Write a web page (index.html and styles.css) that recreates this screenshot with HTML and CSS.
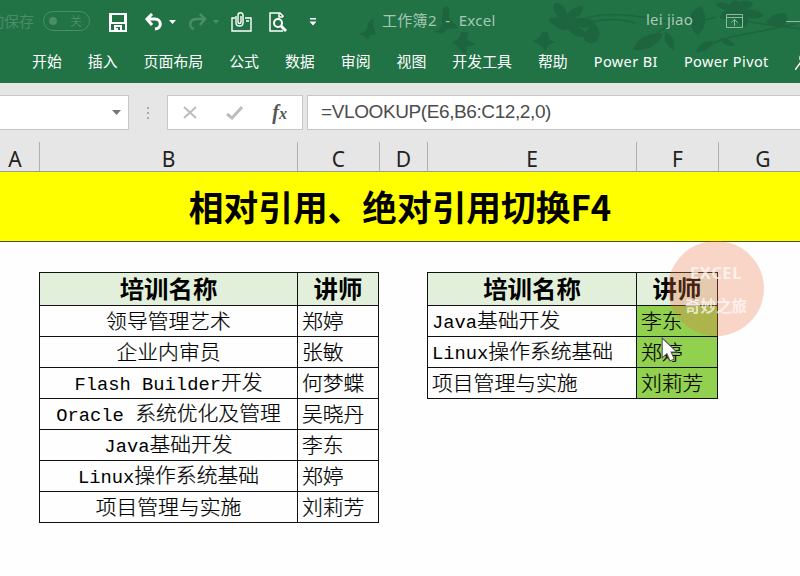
FILE: index.html
```html
<!DOCTYPE html>
<html lang="zh-CN">

<head>
    <meta charset="UTF-8">
    <meta name="viewport" content="width=device-width, initial-scale=1.0">
    <title>工作簿2 - Excel</title>
    <link rel="stylesheet" href="styles.css">
</head>

<body>
    <div class="window">
        <!-- Title bar and ribbon tabs -->
        <header class="ribbon">
            <svg class="ribbon-art" width="800" height="83" viewBox="0 0 800 83">
                <g fill="#1d653e">
                    <path d="M357 33q7 1 10-4l1-6 6-5q-2 7 0 11l2 5-6 1-2 4-5-4z" />
                    <path d="M434 31q8 0 8-13l1-9q3-6 6 0v9l7 7 2 3-11 1-5 5z" />
                    <path d="M452 42q8-2 9-10h7l-1 8 9 4-9 3-1 8-5-4-5-6z" />
                    <path d="M532 41q7 0 10-9h6l1 7 6 3-7 3-2 6-6-6z" />
                    <path d="M548 20q5-4 12-2-10-8-5-15 10 0 12 12 5-9 16-9 1 7-9 13 12-3 22 3-8 9-21 4 12 4 12 11-12 2-19-8-7 4-20-9z" />
                    <path d="M584 40q0-11 11-16 8 9 2 17-6 5-13-1z" />
                    <path d="M633 50q5-17 30-17-6 18-30 17z" />
                    <path d="M665 32q11 4 9 18-11-6-9-18z" />
                    <path d="M691 23q-3-12 10-17 10 17-3 29-6-3-7-12z" />
                    <path d="M696 52q4-12 17-11-3 11-17 11z" />
                    <path d="M715 4q8-4 14 1 4-7 11-3 8-3 13 1-2 6-8 7 13-2 19 6-8 5-17 1 3 6-2 10-9-4-10-12-7 6-15 3 1-6 7-8-8-1-12-6z" />
                    <path d="M720 38q2 9 15 8-4-8-15-8z" />
                    <path d="M766 22q8-10 19-9 6 8-2 13-9 3-17-4z" />
                </g>
                <path d="M580 20q20-7 45-5t47 8q27 0 44-6M595 21q24-4 40 2M633 50l40-28M697 52q21-13 43-17t56-11M735 12l15 10 50 7" fill="none" stroke="#1d653e" stroke-width="1.500" />
            </svg>

            <div class="title-bar">
                <div class="autosave">
                    <span class="autosave-label">自动保存</span>
                    <span class="toggle"><i></i>关</span>
                </div>
                <div class="quick-access">
                    <svg width="18" height="19" viewBox="0 0 18 19" fill="#fff">
                        <path fill-rule="evenodd" d="M0 0h18v19H0zM3 2v7h12V2zM2 11v6h3v-5h8v5h3v-6z" />
                        <path d="M5 12h8v7H5z" />
                        <path d="M7 14h4v3H9v-2H7z" fill="#217346" />
                    </svg>
                    <svg class="undo" width="32" height="19" viewBox="0 0 32 19">
                        <path d="M8 1L3 6l5 6M3 6h8c6 0 8 9 0 10" fill="none" stroke="#fff" stroke-width="3" />
                        <path d="M25 7h7l-3.500 4z" fill="#fff" />
                    </svg>
                    <svg class="redo" width="32" height="19" viewBox="0 0 32 19">
                        <path d="M12 1l5 5-5 6M17 6H9c-9 0-8 9-3 10" fill="none" stroke="#4a8d67" stroke-width="2.500" />
                        <path d="M25 7h6l-3 4z" fill="#4a8d67" />
                    </svg>
                    <svg class="attach" width="21" height="20" viewBox="0 0 21 20" fill="none" stroke="#fff" stroke-width="1.400">
                        <path d="M4 6H1v13h19V6h-6M15 9h3" />
                        <path d="M5 4v7c0 4 7 4 7 0V3c0-3-5-3-5 0v7c0 2 3 2 3 0V4" />
                    </svg>
                    <svg class="preview" width="18" height="20" viewBox="0 0 18 20" fill="none" stroke="#fff" stroke-width="1.500">
                        <path d="M14 5V4l-3-3H1v18h13" />
                        <path d="M10 1v4h4" />
                        <circle cx="9" cy="11" r="4" stroke-width="2" />
                        <path d="M12 14l5 5" stroke-width="3" />
                    </svg>
                    <svg class="customize" width="8" height="8" viewBox="0 0 8 8" fill="#fff">
                        <path d="M1 0h6v1.500H1zM.5 3.500h7L4 7.500z" />
                    </svg>
                </div>
                <div class="doc-title">工作簿2&nbsp; -&nbsp; Excel</div>
                <div class="account">lei jiao</div>
                <svg class="display-options" width="17" height="14" viewBox="0 0 17 14" fill="none" stroke="#8fb9a0">
                    <path d="M.5.500h16v13H.5zM.5 3.500h16M8.500 12V6M5.500 8.500l3-3 3 3" />
                </svg>
                <span class="minimize"></span>
            </div>

            <nav class="tabs">
                <span>开始</span>
                <span>插入</span>
                <span>页面布局</span>
                <span>公式</span>
                <span>数据</span>
                <span>审阅</span>
                <span>视图</span>
                <span>开发工具</span>
                <span>帮助</span>
                <span class="latin">Power BI</span>
                <span class="latin">Power Pivot</span>
                <svg width="18" height="18" viewBox="0 0 18 18" fill="none" stroke="#fff" stroke-width="1.500">
                    <circle cx="10" cy="6" r="5" />
                    <path d="M6 10l-6 8" />
                </svg>
            </nav>
        </header>

        <!-- Formula bar -->
        <div class="formula-bar">
            <div class="name-box">
                <svg width="9" height="5" viewBox="0 0 9 5"><path d="M0 0h9L4.500 5z" fill="#777" /></svg>
            </div>
            <div class="grip"><i></i><i></i><i></i></div>
            <div class="formula-buttons">
                <svg width="14" height="13" viewBox="0 0 14 13"><path d="M1 1l12 11M13 1L1 12" stroke="#bdbdbd" stroke-width="2" /></svg>
                <svg width="17" height="14" viewBox="0 0 17 14"><path d="M1 8l5 4L16 1" fill="none" stroke="#bdbdbd" stroke-width="3" /></svg>
                <span class="fx">f<small>x</small></span>
            </div>
            <div class="formula-input">=VLOOKUP(E6,B6:C12,2,0)</div>
        </div>

        <!-- Column headings -->
        <div class="columns">
            <span>A</span>
            <span>B</span>
            <span>C</span>
            <span>D</span>
            <span>E</span>
            <span>F</span>
            <span>G</span>
        </div>

        <h1 class="banner">相对引用、绝对引用切换F4</h1>

        <!-- Cells -->
        <main class="sheet">
            <table class="source">
                <thead>
                    <tr>
                        <th class="course">培训名称</th>
                        <th class="teacher">讲师</th>
                    </tr>
                </thead>
                <tbody>
                    <tr>
                        <td>领导管理艺术</td>
                        <td>郑婷</td>
                    </tr>
                    <tr>
                        <td>企业内审员</td>
                        <td>张敏</td>
                    </tr>
                    <tr>
                        <td><span class="mono">Flash Builder</span>开发</td>
                        <td>何梦蝶</td>
                    </tr>
                    <tr>
                        <td><span class="mono">Oracle </span>系统优化及管理</td>
                        <td>吴晓丹</td>
                    </tr>
                    <tr>
                        <td><span class="mono">Java</span>基础开发</td>
                        <td>李东</td>
                    </tr>
                    <tr>
                        <td><span class="mono">Linux</span>操作系统基础</td>
                        <td>郑婷</td>
                    </tr>
                    <tr>
                        <td>项目管理与实施</td>
                        <td>刘莉芳</td>
                    </tr>
                </tbody>
            </table>

            <table class="lookup">
                <thead>
                    <tr>
                        <th class="course">培训名称</th>
                        <th class="teacher">讲师</th>
                    </tr>
                </thead>
                <tbody>
                    <tr>
                        <td><span class="mono">Java</span>基础开发</td>
                        <td>李东</td>
                    </tr>
                    <tr>
                        <td><span class="mono">Linux</span>操作系统基础</td>
                        <td>郑婷</td>
                    </tr>
                    <tr>
                        <td>项目管理与实施</td>
                        <td>刘莉芳</td>
                    </tr>
                </tbody>
            </table>
        </main>

        <div class="watermark">
            <span class="watermark-en">EXCEL</span>
            <span>奇妙之旅</span>
        </div>
        <svg class="cursor" width="17" height="25" viewBox="0 0 16 24">
            <path d="M1 1v19l4.500-4 3 7 4-2-3-6.500H15z" fill="#fff" stroke="#555" />
        </svg>
    </div>
</body>

</html>
```
FILE: styles.css
```css
body {
    margin: 0;
    font-family: "Noto Sans", "Noto Sans CJK SC", sans-serif;
}

.window {
    position: relative;
    width: 800px;
    height: 576px;
    overflow: hidden;
    background-color: #fdfefd;
}

/* Ribbon */
.ribbon {
    position: relative;
    height: 83px;
    background-color: #217346;
    color: #fff;
}

.ribbon-art {
    position: absolute;
    top: 0;
    left: 0;
}

.title-bar {
    position: relative;
    display: flex;
    align-items: center;
    height: 42px;
    font-size: 15px;
}

.autosave {
    display: flex;
    align-items: center;
    justify-content: flex-end;
    width: 90px;
    color: #4a8d67;
}

.autosave-label {
    margin-right: 9px;
    font-size: 15px;
    line-height: 20px;
    white-space: nowrap;
}

.toggle {
    display: flex;
    flex: none;
    align-items: center;
    justify-content: space-between;
    box-sizing: border-box;
    width: 47px;
    height: 20px;
    padding: 0 7px 0 5px;
    border: 1px solid #4a8d67;
    border-radius: 10px;
    font-size: 12px;
}

.toggle i {
    width: 8px;
    height: 8px;
    border-radius: 50%;
    background-color: #4a8d67;
}

.quick-access {
    display: flex;
    align-items: center;
    width: 292px;
    box-sizing: border-box;
    padding: 2px 0 0 19px;
}

.undo {
    margin-left: 17px;
}

.redo {
    margin-left: 12px;
}

.attach {
    margin-left: 11px;
}

.preview {
    margin-left: 17px;
}

.customize {
    margin-left: 22px;
}

.doc-title {
    width: 264px;
    margin-top: -4px;
    color: #a5c7b4;
    font-size: 15px;
    letter-spacing: 0.3px;
    white-space: pre;
}

.account {
    width: 80px;
    margin-top: -4px;
    color: #a9cab7;
    font-size: 15px;
    letter-spacing: 0.2px;
}

.display-options {
    margin-right: 43px;
}

.minimize {
    width: 14px;
    height: 1px;
    background-color: #8fb9a0;
}

.tabs {
    position: relative;
    display: flex;
    align-items: center;
    gap: 26px;
    height: 37px;
    padding-left: 32px;
    font-size: 14.9px;
    white-space: nowrap;
}

.tabs span,
.tabs svg {
    flex: none;
}

.tabs .latin {
    font-size: 14.5px;
    letter-spacing: 0.4px;
}

/* Formula bar */
.formula-bar {
    display: flex;
    height: 35px;
    padding: 12px 0;
    background-color: #e6e6e6;
}

.name-box,
.formula-buttons,
.formula-input {
    display: flex;
    align-items: center;
    box-sizing: border-box;
    border: 1px solid #c6c6c6;
    background-color: #fff;
}

.name-box {
    justify-content: flex-end;
    width: 129px;
    padding-right: 7px;
    border-left: none;
}

.grip {
    display: flex;
    flex-direction: column;
    align-items: center;
    justify-content: center;
    gap: 3px;
    width: 38px;
}

.grip i {
    width: 2px;
    height: 2px;
    background-color: #aaa;
}

.formula-buttons {
    justify-content: space-between;
    width: 136px;
    margin-right: 4px;
    padding: 0 15px;
}

.fx {
    color: #555;
    font: italic bold 20px/20px "Liberation Serif", serif;
}

.fx small {
    font-size: 16px;
}

.formula-input {
    flex: 1;
    padding: 0 13px 1px;
    border-right: none;
    color: #4c4c4c;
    font: 19px "Liberation Sans", sans-serif;
    letter-spacing: -0.4px;
}

/* Column headings */
.columns {
    display: grid;
    grid-template-columns: 49px 258px 82px 48px 209px 82px 89px;
    height: 29px;
    margin-left: -9px;
    border-bottom: 1px solid #9b9b9b;
    background-color: #e6e6e6;
    color: #222;
    font-size: 21px;
    line-height: 34px;
    text-align: center;
}

.columns span {
    height: 29px;
    border-right: 1px solid #b0b0b0;
}

.banner {
    box-sizing: border-box;
    height: 70px;
    margin: 0;
    border-bottom: 1px solid #4d4d20;
    background-color: #ff0;
    color: #000;
    font: bold 34.7px/69px "Noto Sans CJK SC", sans-serif;
    text-align: center;
}

/* Tables */
.sheet {
    display: flex;
    align-items: flex-start;
    padding: 30px 0 0 39px;
}

.sheet table {
    flex: none;
    table-layout: fixed;
    border-collapse: collapse;
    color: #000;
    font: 20.8px/26px "Noto Sans CJK SC", sans-serif;
    white-space: nowrap;
}

.sheet th,
.sheet td {
    box-sizing: border-box;
    height: 31px;
    padding: 0 4px 3px;
    border: 1px solid #111;
}

.sheet th {
    height: 33px;
    padding-bottom: 2px;
    background-color: #e2efda;
    font-size: 24.4px;
    font-weight: bold;
}

.sheet td {
    font-weight: 300;
    -webkit-text-stroke: 0.2px #000;
}

.mono {
    font: 18.8px/20px "Liberation Mono", monospace;
    white-space: pre;
    -webkit-text-stroke: 0;
}

.source {
    width: 340px;
    margin-right: 48px;
}

.source .course {
    width: 258px;
}

.source td:first-child {
    text-align: center;
}

.lookup {
    width: 291px;
}

.lookup .course {
    width: 209px;
}

.lookup td:last-child {
    background-color: #92d050;
}

/* Overlays */
.watermark {
    position: absolute;
    top: 241px;
    left: 668px;
    display: flex;
    flex-direction: column;
    align-items: center;
    box-sizing: border-box;
    width: 96px;
    height: 95px;
    padding-top: 20px;
    border-radius: 50%;
    background-color: rgba(240, 115, 70, 0.29);
    color: rgba(255, 255, 255, 0.7);
    font-size: 15.5px;
    font-weight: bold;
    line-height: 24px;
}

.watermark-en {
    margin-bottom: 9px;
    font-size: 16.5px;
    letter-spacing: 0.6px;
}

.cursor {
    position: absolute;
    top: 337px;
    left: 661px;
}
```
